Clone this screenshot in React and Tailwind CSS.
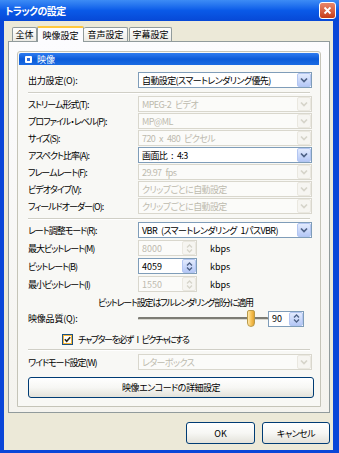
import React from "react";

function Arrow({ disabled }) {
  return (
    <div
      className={`w-[14px] h-[14px] shrink-0 flex items-center justify-center rounded-[2px] border ${
        disabled
          ? "border-[#EAE8E0] bg-[#F6F5F1]"
          : "border-[#B3C6F1] bg-gradient-to-b from-[#E3EBFD] to-[#B5C8F6]"
      }`}
    >
      <svg width="8" height="6" viewBox="0 0 8 6">
        <path
          d="M1 1.5 L4 4.5 L7 1.5"
          fill="none"
          stroke={disabled ? "#D6D4CA" : "#4D6185"}
          strokeWidth="1.7"
        />
      </svg>
    </div>
  );
}

function Select({ value, disabled, w = "w-[174px]" }) {
  return (
    <div
      className={`${w} h-[16px] border flex items-center justify-between pl-[3px] ${
        disabled
          ? "border-[#D9D7CD] bg-[#FBFBF9] text-[#BDBAAE]"
          : "border-[#7F9DB9] bg-white text-black"
      }`}
    >
      <span className="leading-none whitespace-pre tracking-[-0.6px] [word-spacing:2.5px]">{value}</span>
      <Arrow disabled={disabled} />
    </div>
  );
}

function Spin({ value, disabled, w = "w-[59px]" }) {
  return (
    <div
      className={`${w} h-[16px] border flex items-center justify-between pl-[3px] ${
        disabled
          ? "border-[#D9D7CD] bg-[#FBFBF9] text-[#BDBAAE]"
          : "border-[#7F9DB9] bg-white text-black"
      }`}
    >
      <span className="leading-none">{value}</span>
      <div
        className={`w-[14px] h-[14px] flex flex-col items-center justify-center gap-[1px] rounded-[2px] border ${
          disabled
            ? "border-[#EAE8E0] bg-[#F6F5F1]"
            : "border-[#B3C6F1] bg-gradient-to-b from-[#E3EBFD] to-[#B5C8F6]"
        }`}
      >
        <svg width="7" height="4" viewBox="0 0 7 4">
          <path d="M1 3.5 L3.5 1 L6 3.5" fill="none" stroke={disabled ? "#D6D4CA" : "#4D6185"} strokeWidth="1.3" />
        </svg>
        <svg width="7" height="4" viewBox="0 0 7 4">
          <path d="M1 0.5 L3.5 3 L6 0.5" fill="none" stroke={disabled ? "#D6D4CA" : "#4D6185"} strokeWidth="1.3" />
        </svg>
      </div>
    </div>
  );
}

function Row({ label, children, kanji = false }) {
  return (
    <div className="flex items-center h-[16px]">
      <div
        className={`w-[110px] whitespace-nowrap leading-none ${
          kanji ? "tracking-[-0.2px]" : "tracking-[-1px]"
        }`}
      >
        {label}
      </div>
      {children}
    </div>
  );
}

function Sep({ className = "" }) {
  return <div className={`h-[2px] border-t border-b border-t-[#D0CFC6] border-b-white mr-[9px] ${className}`} />;
}

function XPButton({ children, className = "" }) {
  return (
    <div
      className={`flex items-center justify-center rounded-[3px] border border-[#003C74] bg-gradient-to-b from-white via-[#F7F7F4] to-[#E3E2DA] ${className}`}
    >
      {children}
    </div>
  );
}

export default function App() {
  return (
    <div className="w-[339px] h-[453px] bg-[#0A46D8] flex flex-col overflow-hidden font-['Noto_Sans_CJK_JP','Noto_Sans',sans-serif] text-[9px] [font-feature-settings:'palt'_1] text-black">
      {/* Title bar */}
      <div className="h-[21px] shrink-0 flex items-center justify-between pl-[5px] pr-[3px] bg-gradient-to-b from-[#3D8CF5] via-[#0A5AE8] to-[#0748D6]">
        <span className="text-white font-bold text-[10px] leading-none tracking-[-0.6px]">トラックの設定</span>
        <div className="w-[17px] h-[17px] rounded-[3px] border border-white bg-gradient-to-b from-[#E9866A] to-[#C73C12] flex items-center justify-center">
          <svg width="9" height="9" viewBox="0 0 9 9">
            <path d="M1.5 1.5 L7.5 7.5 M7.5 1.5 L1.5 7.5" stroke="white" strokeWidth="1.8" />
          </svg>
        </div>
      </div>

      {/* Body */}
      <div className="flex-1 ml-[4px] mr-[6px] mb-[3px] bg-[#ECE9D8] flex flex-col pt-[5px]">
        {/* Tabs */}
        <div className="ml-[4px] w-[322px] flex items-end pl-[4px] h-[16px] relative z-10">
          <div className="h-[14px] w-[25px] mb-[1px] border border-b-0 border-[#919B9C] rounded-t-[2px] bg-gradient-to-b from-white to-[#ECEBE5] flex items-center justify-center leading-none">
            全体
          </div>
          <div className="h-[16px] w-[47px] border-x border-[#919B9C] border-t-[2px] border-t-[#FFC83C] rounded-t-[2px] bg-[#FCFCFE] flex items-center justify-center leading-none">
            映像設定
          </div>
          <div className="h-[14px] w-[44px] mb-[1px] border border-b-0 border-l-0 border-[#919B9C] rounded-t-[2px] bg-gradient-to-b from-white to-[#ECEBE5] flex items-center justify-center leading-none">
            音声設定
          </div>
          <div className="h-[14px] w-[43px] mb-[1px] ml-[1px] border border-b-0 border-[#919B9C] rounded-t-[2px] bg-gradient-to-b from-white to-[#ECEBE5] flex items-center justify-center leading-none">
            字幕設定
          </div>
        </div>

        {/* Panel */}
        <div className="ml-[4px] w-[322px] h-[372px] -mt-[1px] border border-[#919B9C] bg-gradient-to-b from-[#FCFCFE] to-[#F4F3EE] pt-[9px] px-[8px]">
          <div className="h-[356px] border border-[#C5C4B8] rounded-t-[3px] bg-[#F8F8F5] p-[1px]">
            <div className="h-[12px] rounded-t-[2px] bg-gradient-to-b from-[#2E7CF0] via-[#0B5BD9] to-[#1A6BE3] flex items-center pl-[6px] gap-[3px]">
              <div className="w-[7px] h-[7px] bg-white rounded-[1px] flex items-center justify-center">
                <div className="w-[3px] h-[3px] bg-[#2E6CE0]" />
              </div>
              <span className="text-white leading-none ml-[2px]">映像</span>
            </div>

            <div className="pl-[9px] pt-[7px] flex flex-col">
              <Row kanji label="出力設定(O):">
                <Select value="自動設定(スマートレンダリング優先)" />
              </Row>
              <Sep className="mt-[4px] mb-[2px]" />
              <div className="flex flex-col gap-[1px]">
                <Row label="ストリーム形式(T):"><Select disabled value="MPEG-2 ビデオ" /></Row>
                <Row label="プロファイル・レベル(P):"><Select disabled value="MP@ML" /></Row>
                <Row label="サイズ(S):"><Select disabled value="720 x 480 ピクセル" /></Row>
                <Row label="アスペクト比率(A):"><Select value="画面比 : 4:3" /></Row>
                <Row label="フレームレート(F):"><Select disabled value="29.97 fps" /></Row>
                <Row label="ビデオタイプ(V):"><Select disabled value="クリップごとに自動設定" /></Row>
                <Row label="フィールドオーダー(O):"><Select disabled value="クリップごとに自動設定" /></Row>
              </div>
              <Sep className="mt-[4px] mb-[2px]" />
              <Row label="レート調整モード(R):">
                <Select value="VBR (スマートレンダリング 1パスVBR)" />
              </Row>
              <div className="flex flex-col gap-[2px] mt-[2px]">
                <Row label="最大ビットレート(M)">
                  <Spin disabled value="8000" />
                  <span className="ml-[13px] leading-none">kbps</span>
                </Row>
                <Row label="ビットレート(B)">
                  <Spin value="4059" />
                  <span className="ml-[13px] leading-none">kbps</span>
                </Row>
                <Row label="最小ビットレート(I)">
                  <Spin disabled value="1550" />
                  <span className="ml-[13px] leading-none">kbps</span>
                </Row>
              </div>
              <div className="h-[14px] mt-[3px] flex items-center pl-[70px] leading-none tracking-[-1.2px]">
                ビットレート設定はフルレンダリング部分に適用
              </div>
              <div className="flex items-center h-[19px]">
                <div className="w-[110px] leading-none tracking-[-0.2px]">映像品質(Q):</div>
                <div className="w-[130px] h-[19px] relative flex items-center">
                  <div className="w-full h-[3px] bg-[#7D7C74] border-b border-[#D8D7CF] rounded-[1px]" />
                  <div className="absolute left-[109px] top-[1px] w-[8px] h-[17px] rounded-t-[2px] rounded-b-[4px] border border-[#B99A4A] bg-gradient-to-r from-[#FFE8A8] via-[#F8C458] to-[#E3A431]" />
                </div>
                <Spin value="90" w="w-[36px]" />
              </div>
              <div className="flex items-center h-[16px] pl-[34px] mt-[3px]">
                <div className="w-[11px] h-[11px] border border-[#1C5180] bg-[#FFF3D2] flex items-center justify-center">
                  <div className="w-[9px] h-[9px] border border-[#F8B636] flex items-center justify-center bg-white">
                    <svg width="7" height="7" viewBox="0 0 7 7">
                      <path d="M0.8 3.3 L2.7 5.3 L6.2 1.2" fill="none" stroke="#2E2A1A" strokeWidth="1.6" />
                    </svg>
                  </div>
                </div>
                <span className="ml-[5px] leading-none whitespace-pre tracking-[-1.4px] [word-spacing:3px]">チャプターを必ず I ピクチャにする</span>
              </div>
              <Sep className="mt-[2px] mb-[3px]" />
              <Row label="ワイドモード設定(W)">
                <Select disabled value="レターボックス" />
              </Row>
              <XPButton className="mt-[7px] w-[286px] h-[21px]">
                <span className="leading-none tracking-[-0.5px]">映像エンコードの詳細設定</span>
              </XPButton>
            </div>
          </div>
        </div>

        {/* Bottom buttons */}
        <div className="flex justify-end gap-[7px] mr-[3px] mt-[9px]">
          <XPButton className="w-[69px] h-[22px]">
            <span className="leading-none">OK</span>
          </XPButton>
          <XPButton className="w-[68px] h-[22px]">
            <span className="leading-none tracking-[-0.5px]">キャンセル</span>
          </XPButton>
        </div>
      </div>
    </div>
  );
}
